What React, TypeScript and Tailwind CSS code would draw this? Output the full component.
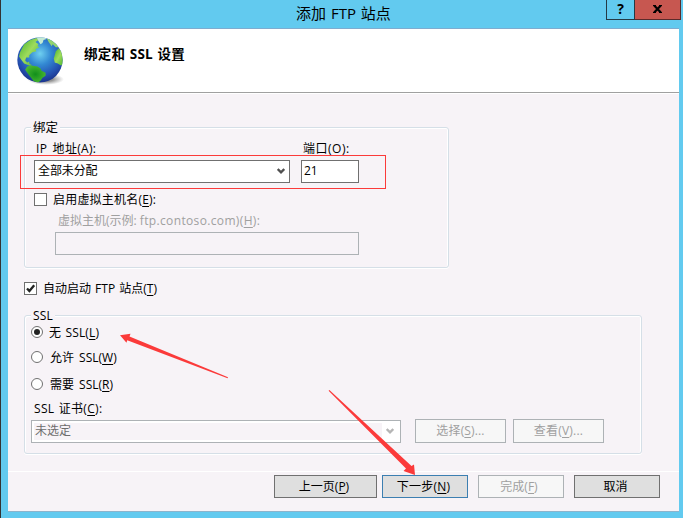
import React from "react";

const FONT = "font-['Open_Sans','Noto_Sans_CJK_SC',sans-serif]";

function Key({ k }: { k: string }) {
  return (
    <>
      (<span className="underline decoration-1 underline-offset-2">{k}</span>)
    </>
  );
}

function Globe() {
  return (
    <svg width="49" height="51" viewBox="0 0 48 50" className="block">
      <defs>
        <radialGradient id="sea" cx="0.5" cy="0.36" r="0.62">
          <stop offset="0" stopColor="#6fd0f0" />
          <stop offset="0.4" stopColor="#3389d3" />
          <stop offset="0.8" stopColor="#2450b0" />
          <stop offset="1" stopColor="#1b3690" />
        </radialGradient>
        <radialGradient id="shade" cx="0.5" cy="0.5" r="0.5">
          <stop offset="0.4" stopColor="#777" stopOpacity="0.8" />
          <stop offset="1" stopColor="#999" stopOpacity="0" />
        </radialGradient>
        <linearGradient id="land" x1="0" y1="0" x2="1" y2="1">
          <stop offset="0" stopColor="#3fb02a" />
          <stop offset="0.5" stopColor="#9fdc5c" />
          <stop offset="1" stopColor="#45b32e" />
        </linearGradient>
        <radialGradient id="south" cx="0.5" cy="0.5" r="0.6">
          <stop offset="0" stopColor="#128f1b" />
          <stop offset="1" stopColor="#4fbb34" />
        </radialGradient>
        <clipPath id="disc">
          <circle cx="22.5" cy="22.5" r="22.2" />
        </clipPath>
      </defs>
      <ellipse cx="28" cy="41.5" rx="18" ry="5.5" fill="url(#shade)" />
      <circle cx="22.5" cy="22.5" r="22.2" fill="url(#sea)" />
      <g clipPath="url(#disc)">
        <path d="M3 15L7 7L13 3L19 1L21 3L18 5L21 7L20 9L22 10L18 12L19 14L15 15L12 18L12 20L9 20L8 23L10 25L12 24L12 26L15 28L12 28L7 26L4 22L2 19Z" fill="url(#land)" />
        <path d="M19 0L27 0L29 2L26 3L25 6L23 7L21 4Z" fill="#c4ead4" />
        <path d="M29 1L34 3L39 7L41 10L38 10L35 7L34 9L31 5Z" fill="#92d46f" />
        <path d="M38 14L41 11L45 16L46 26L43 28L40 26L37 25L36 21L37 18Z" fill="url(#land)" />
        <path d="M10 29L14 28L20 29L23 31L24 33L28 35L28 38L25 40L23 43L20 45L16 43L13 39L10 35L8 32Z" fill="url(#south)" />
      </g>
    </svg>
  );
}

function Group({ title, className, legendClass, children }: { title: string; className: string; legendClass: string; children: React.ReactNode }) {
  return (
    <div className={`relative rounded-[3px] border border-[#d5dfe7] shadow-[0_1px_0_#fff,inset_1px_1px_0_#fff,inset_-1px_0_0_#fff] ${className}`}>
      <span className={`absolute -top-[9px] left-[6px] h-[18px] bg-[#f7f3f7] leading-[18px] ${legendClass}`}>{title}</span>
      {children}
    </div>
  );
}

function Chevron({ color }: { color: string }) {
  return (
    <svg width="8" height="7" viewBox="0 0 8 7" className="block">
      <path d="M0.7 1L4 4.3L7.3 1" fill="none" stroke={color} strokeWidth="2.4" />
    </svg>
  );
}

function Check({ checked = false }: { checked?: boolean }) {
  return (
    <span className="-mt-px block size-[13px] shrink-0 border border-[#707070] bg-white">
      {checked && (
        <svg width="11" height="11" viewBox="0 0 11 11" className="block">
          <path d="M2 5.5L4.4 8L9.2 2.2" fill="none" stroke="#222" strokeWidth="2.3" />
        </svg>
      )}
    </span>
  );
}

function Radio({ checked = false }: { checked?: boolean }) {
  return (
    <span className="flex size-[12px] shrink-0 items-center justify-center rounded-full border border-[#707070] bg-white">
      {checked && <span className="size-[6px] rounded-full bg-[#222]" />}
    </span>
  );
}

function Button({ className, children }: { className: string; children: React.ReactNode }) {
  return <button className={`flex shrink-0 items-center justify-center border whitespace-nowrap ${className}`}>{children}</button>;
}

const disabled = "border-[#adb2b5] bg-[#f7f7f7] text-[#a0a0a0]";

export default function App() {
  return (
    <div className={`relative flex h-[518px] w-[683px] flex-col overflow-hidden border-l border-[#333] bg-[#62caef] text-[12px] leading-[18px] whitespace-nowrap text-black ${FONT}`}>
      <header className="flex h-[28px] shrink-0">
        <div className="ml-[295px] w-[310px] pt-[2px] text-[15px] leading-[22px] [word-spacing:1px]">添加 FTP 站点</div>
        <div className="flex h-[20px] w-[29px] items-center justify-center border border-t-0 border-[#243a45] pb-[2px] text-[14px] font-bold">?</div>
        <div className="flex h-[20px] w-[46px] items-center justify-center border border-t-0 border-l-0 border-[#5a2b2b] bg-[#c75750] pb-px">
          <svg width="9" height="8" viewBox="0 0 9 8">
            <path d="M1.2 0.5L7.8 7.5M7.8 0.5L1.2 7.5" stroke="#000" strokeWidth="2.2" />
            <path d="M0 0.5H3M6 0.5H9M0 7.5H3M6 7.5H9" stroke="#000" />
          </svg>
        </div>
      </header>

      <main className="ml-[7px] flex h-[484px] w-[671px] flex-col border-t border-b border-t-[#7faccf] border-b-[#8bb4cc] bg-[#f7f3f7]">
        <div className="flex h-[64px] shrink-0 border-b border-[#a0a0a0] bg-white">
          <div className="mt-[8px] ml-[9px] w-[67px]"><Globe /></div>
          <h1 className="mt-[16px] text-[13.5px] leading-[18px] font-bold tracking-[0.2px] [word-spacing:1px]">绑定和 SSL 设置</h1>
        </div>
        <div className="h-px shrink-0 bg-white" />

        <div className="flex h-[377px] shrink-0 flex-col pt-[33px] pl-[16px]">
          <Group title="绑定" className="h-[141px] w-[425px] pl-[9px]" legendClass="pl-[2px] pr-[2px] text-[12.5px]">
            <div className="flex pt-[12px]">
              <div className="w-[267px] pl-[2px] tracking-[0.3px] [word-spacing:2px]">IP 地址<Key k="A" />:</div>
              <div className="pl-[2px] tracking-[0.5px]">端口<Key k="O" />:</div>
            </div>
            <div className="mt-[2px] flex gap-[11px]">
              <div className="flex h-[23px] w-[256px] items-center justify-between border border-[#707070] bg-white pr-[4px] pl-[3px]">
                <span className="-mt-px -tracking-[0.1px]">全部未分配</span>
                <Chevron color="#505050" />
              </div>
              <div className="h-[23px] w-[58px] border border-[#707070] bg-white pl-[2px] leading-[20px]">21</div>
            </div>
            <div className="mt-[8px] flex h-[18px] items-center gap-[6px]">
              <Check />
              <span className="tracking-[0.2px]">启用虚拟主机名<Key k="E" />:</span>
            </div>
            <div className="mt-[3px] pl-[24px] text-[#a0a0a0]">虚拟主机(示例: <span className="tracking-[0.35px]">ftp.contoso.com)<Key k="H" />:</span></div>
            <div className="mt-[2px] ml-[21px] h-[23px] w-[304px] border border-[#adb2b5]" />
          </Group>

          <div className="mt-[12px] flex h-[18px] items-center gap-[6px]">
            <Check checked />
            <span className="[word-spacing:1px]">自动启动 FTP 站点<Key k="T" /></span>
          </div>

          <Group title="SSL" className="mt-[17px] h-[139px] w-[618px] pl-[6px]" legendClass="pl-[2px] pr-[2px] text-[12px] tracking-[0.2px]">
            <div className="mt-[7px] flex h-[18px] items-center gap-[6px]"><Radio checked /><span className="mt-[2px] [word-spacing:1px] tracking-[0.15px]">无 SSL<Key k="L" /></span></div>
            <div className="mt-[7px] flex h-[18px] items-center gap-[7px]"><Radio /><span className="mt-[2px] [word-spacing:2px]">允许 SSL<Key k="W" /></span></div>
            <div className="mt-[9px] flex h-[18px] items-center gap-[7px]"><Radio /><span className="mt-[2px] [word-spacing:2px]">需要 SSL<Key k="R" /></span></div>
            <div className="mt-[7px] pl-[3px] tracking-[0.3px] [word-spacing:1px]">SSL 证书<Key k="C" />:</div>
            <div className="mt-px flex">
              <div className="mt-px flex h-[23px] w-[370px] border border-[#adb2b5] bg-white p-[2px]">
                <span className="w-[348px] bg-[#f7f3f7] pl-px leading-[15px] text-[#6d6d6d]">未选定</span>
                <span className="flex flex-1 items-center justify-center"><Chevron color="#b5b5b5" /></span>
              </div>
              <Button className={`ml-[14px] h-[24px] w-[91px] pb-px tracking-[0.15px] ${disabled}`}>选择<Key k="S" />...</Button>
              <Button className={`ml-[7px] h-[24px] w-[91px] pb-px tracking-[0.2px] ${disabled}`}>查看<Key k="V" />...</Button>
            </div>
          </Group>
        </div>

        <footer className="flex h-[40px] shrink-0 border-t border-white pt-[3px] pl-[266px]">
          <Button className="h-[23px] w-[103px] border-[#707070] bg-[#dfdfdf] pr-[3px]">上一页<Key k="P" /></Button>
          <Button className="ml-[5px] h-[23px] w-[86px] border-[#3c7fb1] bg-[#dfdfdf] pr-[3px] tracking-[0.2px]">下一步<Key k="N" /></Button>
          <Button className={`ml-[10px] h-[23px] w-[86px] pr-[4px] ${disabled}`}>完成<Key k="F" /></Button>
          <Button className="ml-[10px] h-[23px] w-[86px] border-[#707070] bg-[#dfdfdf] pr-[3px]">取消</Button>
        </footer>
      </main>

      <div className="pointer-events-none absolute top-[155px] left-[19px] h-[34px] w-[366px] border border-[#fb3a3a]" />
      <svg className="pointer-events-none absolute top-0 -left-px" width="683" height="518" viewBox="0 0 683 518" fill="#fb3a3a">
        <path d="M120 335.3L130.5 333.8L129.5 336.4L228 377.3L227.6 378.2L127.2 340.3L126.5 342.7Z" />
        <path d="M415 475L403.5 471L406 468.5L328.6 390.8L329.4 390L411.5 466L414 464.5Z" />
      </svg>
    </div>
  );
}
